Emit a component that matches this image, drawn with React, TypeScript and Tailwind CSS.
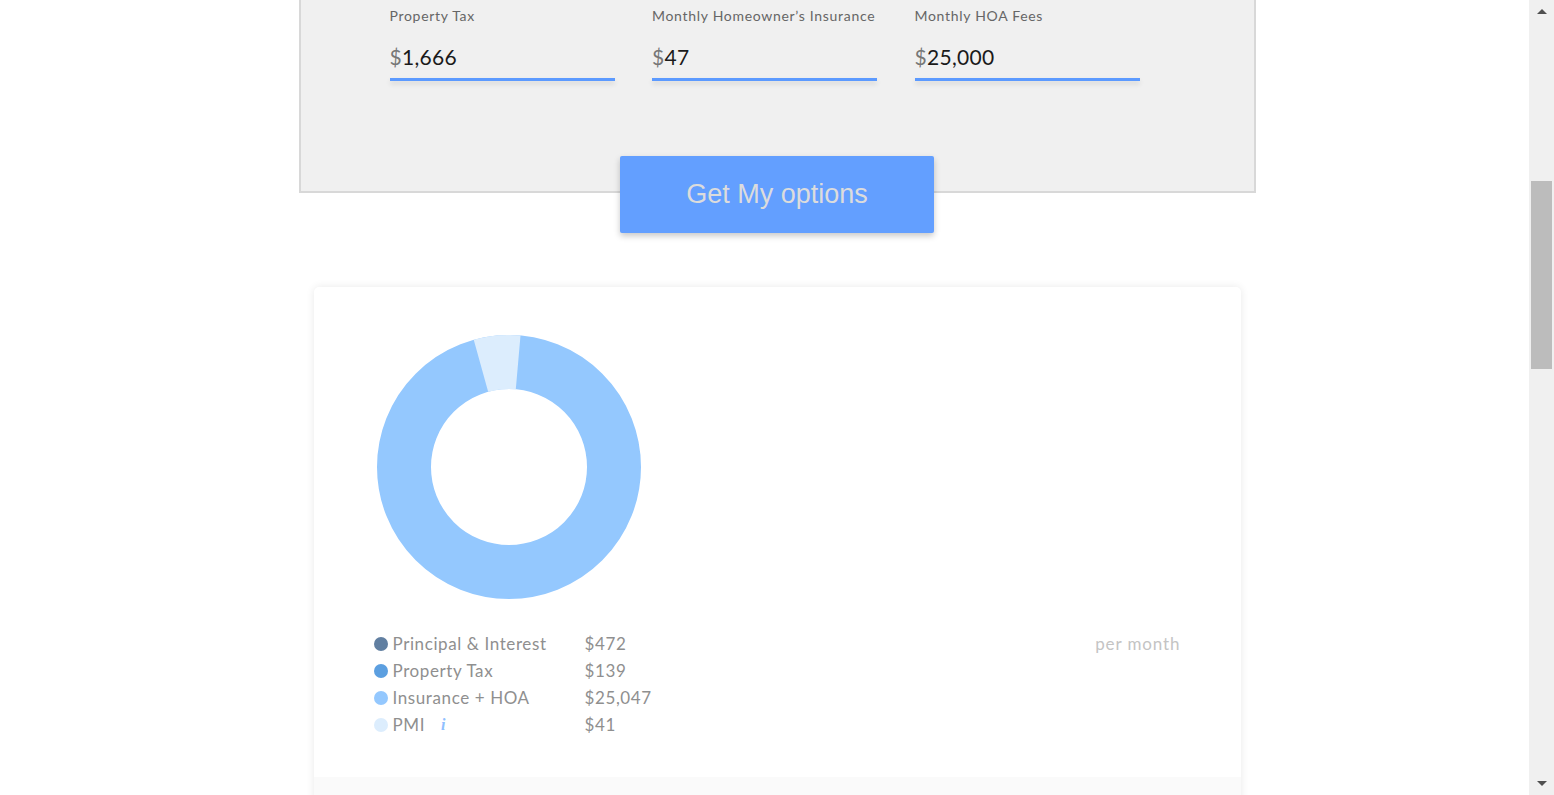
const fields = [
  { label: "Property Tax", value: "1,666" },
  { label: "Monthly Homeowner’s Insurance", value: "47" },
  { label: "Monthly HOA Fees", value: "25,000" },
];

const legend = [
  { label: "Principal & Interest", value: "$472", dot: "bg-[#617fa1]" },
  { label: "Property Tax", value: "$139", dot: "bg-[#5c9fe0]" },
  { label: "Insurance + HOA", value: "$25,047", dot: "bg-[#94c8fe]" },
  { label: "PMI", value: "$41", dot: "bg-[#dcedfd]", info: true },
];

function Donut() {
  return (
    <svg width="264" height="264" viewBox="0 0 264 264" className="ml-[3px] block">
      <circle cx="132" cy="132" r="105" fill="none" stroke="#94c8fe" strokeWidth="54" />
      <path
        d="M 96.73 4.81 A 132 132 0 0 1 143.5 0.5 L 138.8 54.3 A 78 78 0 0 0 111.16 56.84 Z"
        fill="#dcedfd"
      />
    </svg>
  );
}

function Scrollbar() {
  return (
    <div className="absolute right-0 top-0 h-full w-[25px] bg-[#f0f0f0]">
      {/* arrows */}
      <div className="absolute left-[8px] top-[9px] h-0 w-0 border-x-[5px] border-b-[5px] border-x-transparent border-b-[#505050]" />
      <div className="absolute left-[2px] top-[181px] h-[188px] w-[21px] bg-[#bcbcbc]" />
      <div className="absolute left-[8px] bottom-[9px] h-0 w-0 border-x-[5px] border-t-[5px] border-x-transparent border-t-[#505050]" />
    </div>
  );
}

export default function App() {
  return (
    <div className="relative h-[795px] overflow-hidden bg-white font-['Lato','Open_Sans',sans-serif]">
      <div className="mx-auto w-[957px]">
        {/* Inputs panel */}
        <div className="h-[193px] border-x-2 border-b-2 border-[#d8d8d8] bg-[#f0f0f0] pl-[89px] pt-[7px]">
          <div className="flex gap-[37.5px]">
            {fields.map(f => (
              <div key={f.label} className="w-[225px]">
                <div className="h-[18px] whitespace-nowrap text-[14px] leading-[18px] tracking-[0.7px] text-[#666]">{f.label}</div>
                <div className="mt-[18px] h-[28px] text-[21px] leading-[28px] tracking-[0.3px] text-[#1a1a1a]">
                  <span className="text-[#777]">$</span>
                  {f.value}
                </div>
                <div className="mt-[7px] h-[3px] bg-[#5c9aff] shadow-[0_3px_5px_rgba(0,0,0,0.12)]" />
              </div>
            ))}
          </div>
        </div>

        {/* CTA */}
        <div className="-mt-[37px] flex justify-center">
          <button className="relative h-[77px] w-[314px] rounded-[2px] bg-[#639fff] font-['Liberation_Sans',Arial,sans-serif] text-[27px] text-[#dcdcdc] shadow-[0_3px_6px_rgba(0,0,0,0.22)]">
            Get My options
          </button>
        </div>

        {/* Results card */}
        <div className="mx-[15px] mt-[54px] overflow-hidden rounded-[5px] bg-white shadow-[0_0_8px_rgba(0,0,0,0.09)]">
          <div className="px-[60px] pt-[48px] pb-[39px]">
            <Donut />
            <div className="mt-[31px] flex items-start justify-between">
              <div className="flex flex-col">
                {legend.map(l => (
                  <div key={l.label} className="flex h-[27px] items-center text-[17px] tracking-[0.6px] text-[#8f8f8f]">
                    <div className="flex w-[211px] items-center">
                      <span className={`h-[14px] w-[14px] rounded-full ${l.dot}`} />
                      <span className="ml-[5px]">{l.label}</span>
                      {l.info && (
                        <span className="ml-[16px] font-['Liberation_Serif',serif] text-[16px] font-bold italic text-[#90c0ff]">
                          i
                        </span>
                      )}
                    </div>
                    <span>{l.value}</span>
                  </div>
                ))}
              </div>
              <div className="flex h-[27px] items-center text-[17px] tracking-[0.9px] text-[#c4c4c4]">per month</div>
            </div>
          </div>
          <div className="h-[40px] bg-[#fafafa]" />
        </div>
      </div>
      <Scrollbar />
    </div>
  );
}
